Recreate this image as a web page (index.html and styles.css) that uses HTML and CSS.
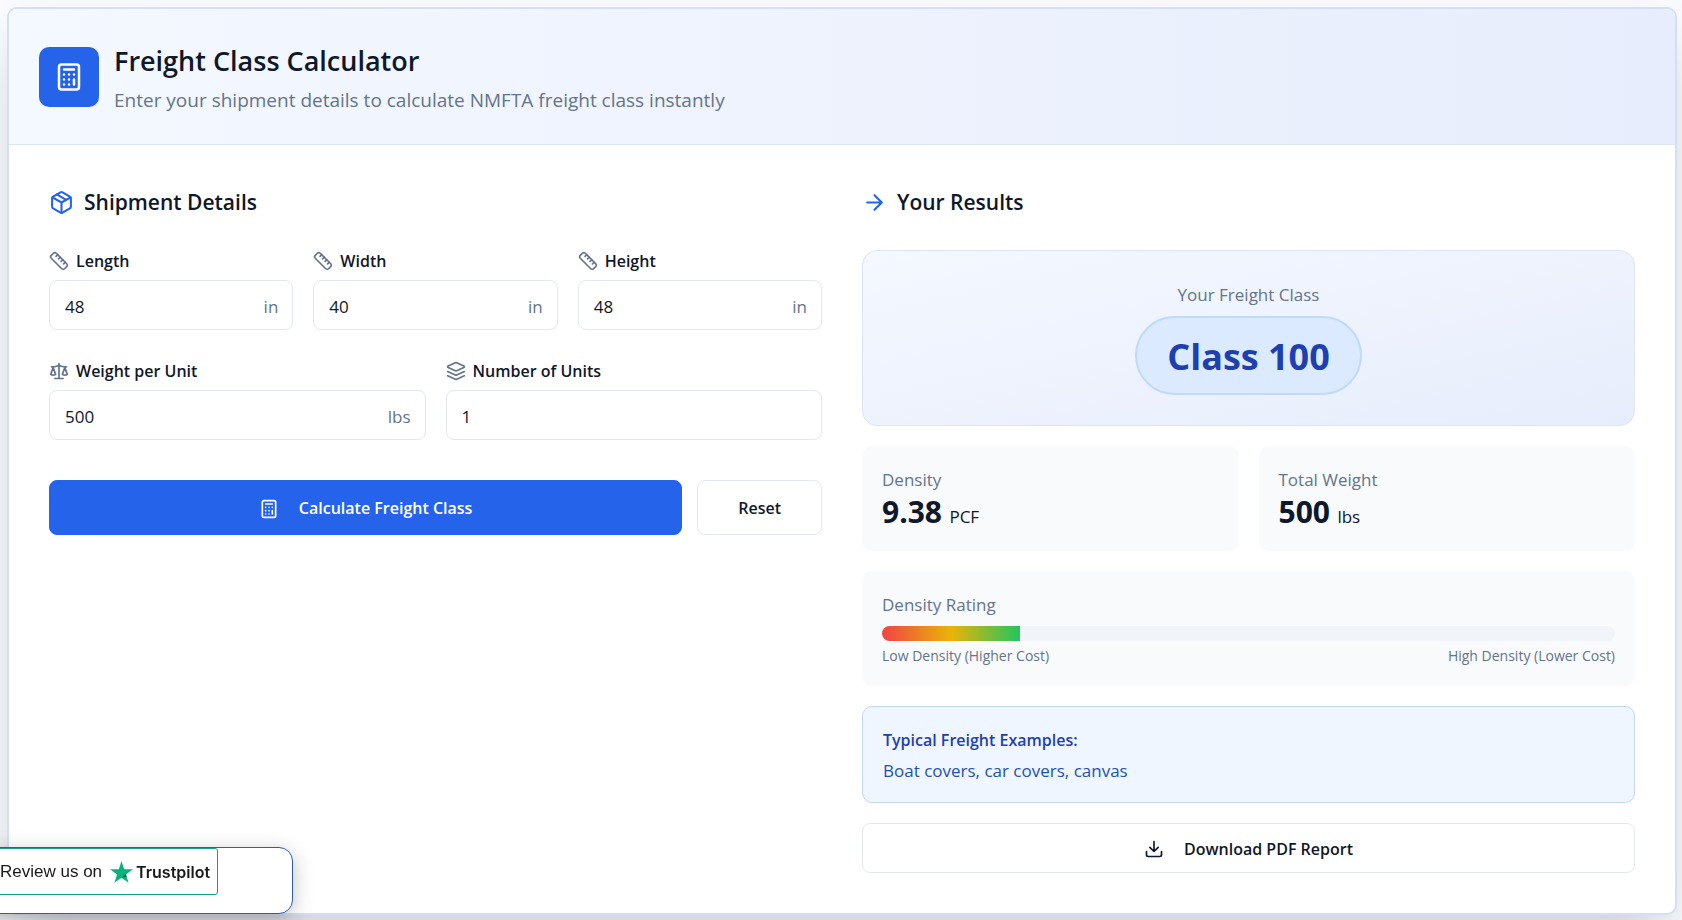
FILE: index.html
```
<!DOCTYPE html>
<html lang="en">
<head>
<meta charset="UTF-8" />
<meta name="viewport" content="width=device-width, initial-scale=1" />
<title>Freight Class Calculator</title>
<link rel="stylesheet" href="styles.css">
</head>
<body>

<!-- shared icons -->
<svg class="sprite" aria-hidden="true">
  <symbol id="i-calculator" viewBox="0 0 24 24">
    <rect x="4" y="2" width="16" height="20" rx="2"/>
    <path d="M8 6h8M16 14v4M16 10h.01M12 10h.01M8 10h.01M12 14h.01M8 14h.01M12 18h.01M8 18h.01"/>
  </symbol>
  <symbol id="i-package" viewBox="0 0 24 24">
    <path d="m7.5 4.27 9 5.15"/>
    <path d="M21 8a2 2 0 0 0-1-1.73l-7-4a2 2 0 0 0-2 0l-7 4A2 2 0 0 0 3 8v8a2 2 0 0 0 1 1.73l7 4a2 2 0 0 0 2 0l7-4A2 2 0 0 0 21 16Z"/>
    <path d="m3.3 7 8.7 5 8.7-5M12 22V12"/>
  </symbol>
  <symbol id="i-ruler" viewBox="0 0 24 24">
    <path d="M21.3 15.3a2.4 2.4 0 0 1 0 3.4l-2.6 2.6a2.4 2.4 0 0 1-3.4 0L2.7 8.7a2.41 2.41 0 0 1 0-3.4l2.6-2.6a2.41 2.41 0 0 1 3.4 0Z"/>
    <path d="m14.5 12.5 2-2M11.5 9.5l2-2M8.5 6.5l2-2M17.5 15.5l2-2"/>
  </symbol>
  <symbol id="i-scale" viewBox="0 0 24 24">
    <path d="m16 16 3-8 3 8c-.87.65-1.92 1-3 1s-2.13-.35-3-1ZM2 16l3-8 3 8c-.87.65-1.92 1-3 1s-2.13-.35-3-1ZM7 21h10M12 3v18M3 7h2c2 0 5-1 7-2 2 1 5 2 7 2h2"/>
  </symbol>
  <symbol id="i-layers" viewBox="0 0 24 24">
    <path d="m12.83 2.18a2 2 0 0 0-1.66 0L2.6 6.08a1 1 0 0 0 0 1.83l8.58 3.91a2 2 0 0 0 1.66 0l8.58-3.9a1 1 0 0 0 0-1.83Z"/>
    <path d="m22 17.65-9.17 4.16a2 2 0 0 1-1.66 0L2 17.65M22 12.65l-9.17 4.16a2 2 0 0 1-1.66 0L2 12.65"/>
  </symbol>
  <symbol id="i-arrow" viewBox="0 0 24 24">
    <path d="M5 12h14M12 5l7 7-7 7"/>
  </symbol>
  <symbol id="i-download" viewBox="0 0 24 24">
    <path d="M21 15v4a2 2 0 0 1-2 2H5a2 2 0 0 1-2-2v-4M7 10l5 5 5-5M12 15V3"/>
  </symbol>
</svg>

<main class="calculator">
  <header class="calculator-header">
    <div class="header-icon"><svg class="icon icon-lg"><use href="#i-calculator"/></svg></div>
    <div>
      <h1>Freight Class Calculator</h1>
      <p>Enter your shipment details to calculate NMFTA freight class instantly</p>
    </div>
  </header>

  <div class="calculator-body">
    <form id="freightForm">
      <h2><svg class="icon icon-md"><use href="#i-package"/></svg>Shipment Details</h2>

      <div class="form-row three">
        <div class="field">
          <label for="length"><svg class="icon"><use href="#i-ruler"/></svg>Length</label>
          <div class="input-wrap"><input type="text" inputmode="decimal" id="length" value="48"><span class="unit">in</span></div>
        </div>
        <div class="field">
          <label for="width"><svg class="icon"><use href="#i-ruler"/></svg>Width</label>
          <div class="input-wrap"><input type="text" inputmode="decimal" id="width" value="40"><span class="unit">in</span></div>
        </div>
        <div class="field">
          <label for="height"><svg class="icon"><use href="#i-ruler"/></svg>Height</label>
          <div class="input-wrap"><input type="text" inputmode="decimal" id="height" value="48"><span class="unit">in</span></div>
        </div>
      </div>

      <div class="form-row two">
        <div class="field">
          <label for="weight"><svg class="icon"><use href="#i-scale"/></svg>Weight per Unit</label>
          <div class="input-wrap"><input type="text" inputmode="decimal" id="weight" value="500"><span class="unit">lbs</span></div>
        </div>
        <div class="field">
          <label for="units"><svg class="icon"><use href="#i-layers"/></svg>Number of Units</label>
          <div class="input-wrap"><input type="text" inputmode="numeric" id="units" value="1"></div>
        </div>
      </div>

      <div class="actions">
        <button type="button" class="btn btn-primary"><svg class="icon"><use href="#i-calculator"/></svg>Calculate Freight Class</button>
        <button type="reset" class="btn">Reset</button>
      </div>
    </form>

    <section class="results">
      <h2><svg class="icon icon-md"><use href="#i-arrow"/></svg>Your Results</h2>

      <div class="class-card">
        <p class="muted">Your Freight Class</p>
        <div class="class-badge">Class 100</div>
      </div>

      <div class="stats">
        <div class="stat">
          <p class="muted">Density</p>
          <p class="stat-value"><strong>9.38</strong> PCF</p>
        </div>
        <div class="stat">
          <p class="muted">Total Weight</p>
          <p class="stat-value"><strong>500</strong> lbs</p>
        </div>
      </div>

      <div class="rating">
        <p class="muted">Density Rating</p>
        <div class="bar"><div class="bar-fill" style="width: 18.76%"></div></div>
        <div class="bar-labels"><span>Low Density (Higher Cost)</span><span>High Density (Lower Cost)</span></div>
      </div>

      <div class="examples">
        <h3>Typical Freight Examples:</h3>
        <p>Boat covers, car covers, canvas</p>
      </div>

      <button type="button" class="btn btn-download"><svg class="icon"><use href="#i-download"/></svg>Download PDF Report</button>
    </section>
  </div>
</main>

<aside class="review-widget">
  <a class="review-link" href="#">
    Review us on
    <svg class="star" viewBox="0 0 24 23">
      <path fill="#00b67a" d="M12 0l2.8 8.7H24l-7.4 5.4 2.8 8.7L12 17.4l-7.4 5.4 2.8-8.7L0 8.7h9.2z"/>
      <path fill="#005128" d="M17.3 16.1l-.7-2L12 17.4z"/>
    </svg>
    <b>Trustpilot</b>
  </a>
</aside>

</body>
</html>
```
FILE: styles.css
```
/* base */
* { box-sizing: border-box; }

body {
  margin: 0;
  padding: 7px 5px 5px 7px;
  min-height: 100vh;
  overflow: hidden;
  background: #f8fafe;
  color: #0f172a;
  font: 17px/27px "Segoe UI", "Open Sans", "Noto Sans", sans-serif;
}

h1, h2, h3, p { margin: 0; }
.sprite { position: absolute; width: 0; height: 0; }

.icon {
  flex: none;
  width: 20px;
  height: 20px;
  fill: none;
  stroke: currentColor;
  stroke-width: 2;
  stroke-linecap: round;
  stroke-linejoin: round;
}
.icon-md { width: 25px; height: 25px; color: #2563eb; }
.icon-lg { width: 30px; height: 30px; }
.muted { color: #64748b; }

/* card */
.calculator {
  background: #fff;
  border: 2px solid #d5dff3;
  border-radius: 10px;
  overflow: hidden;
  box-shadow: 0 25px 50px -12px rgba(0, 0, 0, 0.2);
}
.calculator-header {
  display: flex;
  align-items: center;
  gap: 15px;
  padding: 30px;
  border-bottom: 1px solid #dde5ef;
  background: linear-gradient(90deg, #f4f8ff, #e7edfc);
}
.header-icon {
  display: grid;
  place-items: center;
  width: 60px;
  height: 60px;
  border-radius: 10px;
  background: #2563eb;
  color: #fff;
}
h1 { margin-bottom: 4px; font-size: 27px; line-height: 43px; font-weight: 600; }
.calculator-header p { font-size: 19px; line-height: 28px; color: #64748b; }

.calculator-body {
  display: grid;
  grid-template-columns: 1fr 1fr;
  gap: 40px;
  padding: 40px;
}
h2 {
  display: flex;
  align-items: center;
  gap: 10px;
  margin-bottom: 30px;
  font-size: 21px;
  line-height: 35px;
  font-weight: 600;
}

/* form */
.form-row { display: grid; gap: 20px; margin-bottom: 30px; }
.three { grid-template-columns: repeat(3, 1fr); }
.two { grid-template-columns: repeat(2, 1fr); margin-bottom: 40px; }
label {
  display: flex;
  align-items: center;
  gap: 7px;
  margin-bottom: 8px;
  font-size: 16px;
  line-height: 22px;
  font-weight: 600;
}
label .icon { color: #64748b; }
.input-wrap { position: relative; }
input {
  display: block;
  width: 100%;
  height: 50px;
  padding: 2px 15px 0;
  border: 1px solid #e2e8f0;
  border-radius: 8px;
  background: #fff;
  color: inherit;
  font: inherit;
}
.unit {
  position: absolute;
  top: 13px;
  right: 15px;
  color: #64748b;
}
.actions { display: flex; gap: 15px; }
.btn {
  display: flex;
  align-items: center;
  justify-content: center;
  gap: 20px;
  height: 55px;
  padding: 2px 40px 0;
  border: 1px solid #e2e8f0;
  border-radius: 8px;
  background: #fff;
  color: inherit;
  font: inherit;
  font-size: 16px;
  font-weight: 600;
}
.btn-primary { flex: 1; border-color: #2563eb; background: #2563eb; color: #fff; }
.btn-download { width: 100%; height: 50px; }

/* results */
.results { display: grid; gap: 20px; }
.results h2 { margin-bottom: 10px; }
.class-card {
  display: flex;
  flex-direction: column;
  align-items: center;
  gap: 8px;
  padding: 30px;
  border: 1px solid #dde5f2;
  border-radius: 15px;
  background: linear-gradient(to bottom right, #f4f8ff, #e7edfc);
}
.class-badge {
  padding: 11px 30px 9px;
  border: 2px solid #bfdbf8;
  border-radius: 40px;
  background: #dbeafe;
  color: #1e40af;
  font-size: 36px;
  line-height: 55px;
  font-weight: 700;
}
.stats { display: grid; grid-template-columns: 1fr 1fr; gap: 20px; }
.stat, .rating { padding: 20px; border-radius: 10px; background: #f8fafc; }
.stat-value { line-height: 24px; }
.stat-value strong { margin-right: 3px; font-size: 30px; line-height: 38px; }
.bar {
  height: 15px;
  margin-top: 8px;
  border-radius: 8px;
  overflow: hidden;
  background: #f1f5f9;
}
.bar-fill { height: 100%; background: linear-gradient(90deg, #ef4444, #eab308, #22c55e); }
.bar-labels {
  display: flex;
  justify-content: space-between;
  padding-top: 5px;
  color: #64748b;
  font-size: 14px;
  line-height: 20px;
}
.examples {
  padding: 21px 20px 19px;
  border: 1px solid #c3d9f3;
  border-radius: 10px;
  background: #eff6ff;
  color: #2450b5;
  line-height: 25px;
}
.examples h3 { margin-bottom: 5px; color: #1e40af; font-size: 16px; font-weight: 600; }

/* review badge over the bottom left corner */
.review-widget {
  position: fixed;
  left: -20px;
  bottom: 6px;
  width: 313px;
  height: 67px;
  border: 1px solid #2a5cb0;
  border-radius: 14px;
  background: #fff;
  box-shadow: 0 5px 20px rgba(0, 0, 0, 0.25);
}
.review-link {
  display: flex;
  align-items: center;
  width: 237px;
  height: 47px;
  padding-left: 18px;
  border: 1px solid #1a9c80;
  border-radius: 3px;
  color: #191919;
  font: 17px/24px "Liberation Sans", Arial, sans-serif;
  text-decoration: none;
}
.star { width: 23px; height: 22px; margin: 0 3px 0 8px; }
.review-link b { font: 600 16px/24px Inter, sans-serif; }
```
